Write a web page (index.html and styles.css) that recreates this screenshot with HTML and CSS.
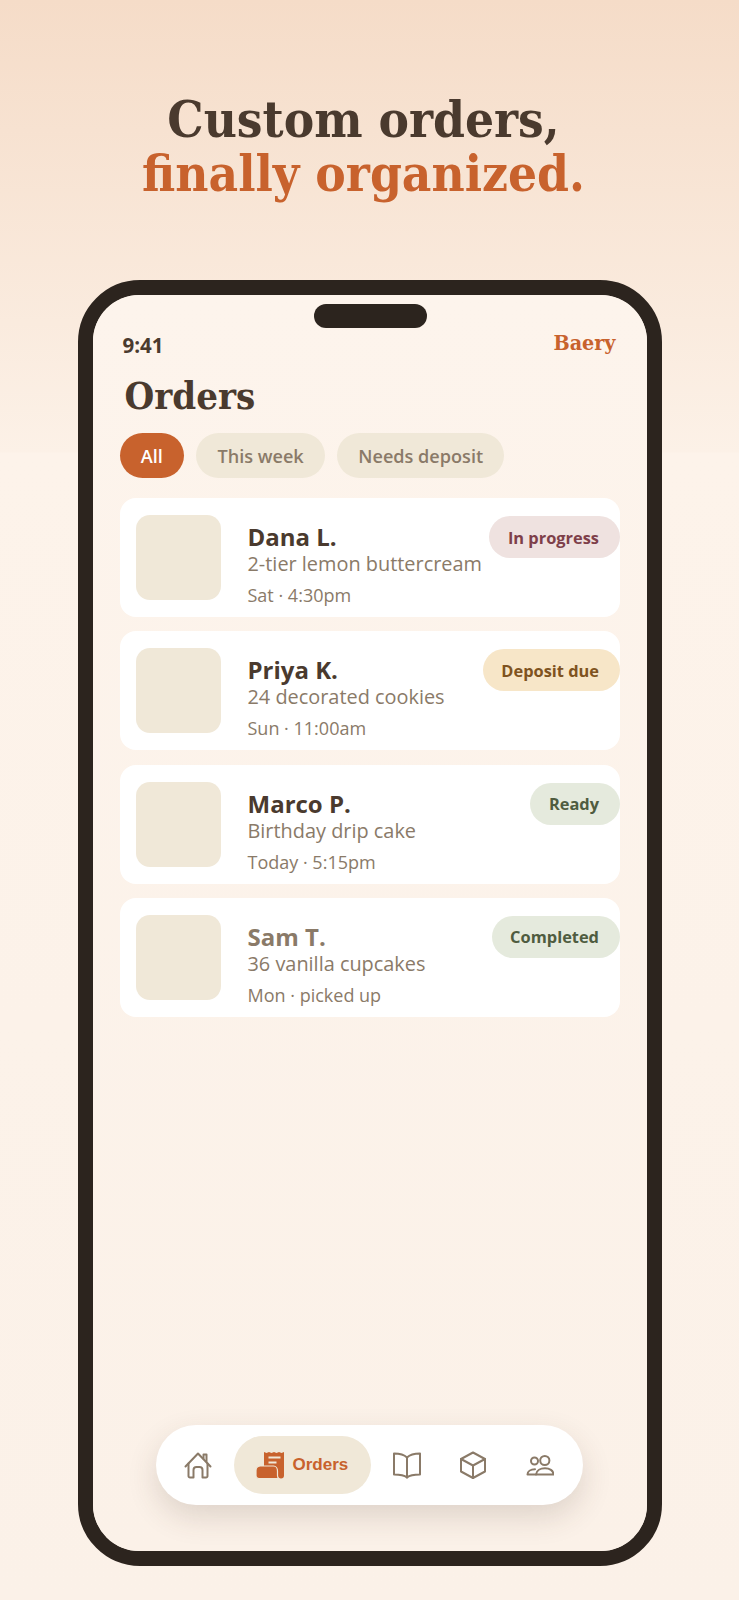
FILE: index.html
```html
<!DOCTYPE html>
<html lang="en">
<head>
<meta charset="utf-8">
<title>Baery orders</title>
<link rel="stylesheet" href="styles.css">
</head>
<body>
<div class="page">
  <header class="hero">
    <h1 class="headline">Custom orders,<br><span class="accent">finally organized.</span></h1>
  </header>
  <div class="phone">
    <div class="screen">
      <div class="island"></div>
      <div class="status"><span class="time">9:41</span><span class="brand">Baery</span></div>
      <h2 class="title">Orders</h2>
      <div class="chips">
        <span class="chip chip-on">All</span>
        <span class="chip">This week</span>
        <span class="chip">Needs deposit</span>
      </div>
      <div class="list">
        <article class="card">
          <div class="thumb"></div>
          <div class="info">
            <div class="name">Dana L.</div>
            <div class="desc">2-tier lemon buttercream</div>
            <div class="meta">Sat · 4:30pm</div>
          </div>
          <span class="pill pill-progress">In progress</span>
        </article>
        <article class="card">
          <div class="thumb"></div>
          <div class="info">
            <div class="name">Priya K.</div>
            <div class="desc">24 decorated cookies</div>
            <div class="meta">Sun · 11:00am</div>
          </div>
          <span class="pill pill-deposit">Deposit due</span>
        </article>
        <article class="card">
          <div class="thumb"></div>
          <div class="info">
            <div class="name">Marco P.</div>
            <div class="desc">Birthday drip cake</div>
            <div class="meta">Today · 5:15pm</div>
          </div>
          <span class="pill pill-ready">Ready</span>
        </article>
        <article class="card">
          <div class="thumb"></div>
          <div class="info">
            <div class="name name-muted">Sam T.</div>
            <div class="desc">36 vanilla cupcakes</div>
            <div class="meta">Mon · picked up</div>
          </div>
          <span class="pill pill-ready">Completed</span>
        </article>
      </div>
      <nav class="nav">
        <svg class="icon" viewBox="0 0 28 28" fill="none" stroke="#8a7a68" stroke-width="2" stroke-linecap="round" stroke-linejoin="round"><path d="M1.500 15.500 14 2.500l12.500 13"/><path d="M4.500 12.500V25a1.500 1.500 0 0 0 1.500 1.500h3.500V19a3 3 0 0 1 3-3h3a3 3 0 0 1 3 3v7.500H22a1.500 1.500 0 0 0 1.500-1.500V12.500"/><path d="M19.500 7.500V3.500h3v7"/></svg>
        <div class="nav-on">
          <svg class="icon" viewBox="0 0 28 28"><path fill="#c8622d" d="M8 1l2.500 1L13 1l2.500 1L18 1l2.500 1L23 1l2.500 1L28 1v23.500a3 3 0 0 1-3 3h-6V17H8z"/><path fill="#c8622d" stroke="#f0e8d8" stroke-width="1.200" d="M4 15H17.500C20 15 21.500 17.500 21.500 20V24.500C21.500 26 22 27 23 27.600H3A3 3 0 0 1 0 24.500V19.500A4.500 4.500 0 0 1 4 15z"/><path stroke="#f0e8d8" stroke-width="1.800" d="M12.500 6.500H24.500M12.500 11.500H20.500"/></svg>
          <span class="nav-label">Orders</span>
        </div>
        <div class="nav-group">
          <svg class="icon" viewBox="0 0 28 28" fill="none" stroke="#8a7a68" stroke-width="2" stroke-linecap="round" stroke-linejoin="round"><path d="M14 6.500C11 3.500 6 2.500 1 2.500v21c5 0 10 .5 13 3 3-2.500 8-3 13-3v-21c-5 0-10 1-13 4z"/><path d="M14 6.500v20"/></svg>
          <svg class="icon" viewBox="0 0 28 28" fill="none" stroke="#8a7a68" stroke-width="2" stroke-linecap="round" stroke-linejoin="round"><path d="M14 1.500 26 8v12.500L14 27 2 20.500V8z"/><path d="M2 8l12 6.500L26 8M14 14.500V27"/></svg>
          <svg class="icon" viewBox="0 0 28 28" fill="none" stroke="#8a7a68" stroke-width="2" stroke-linecap="round" stroke-linejoin="round"><circle cx="8.500" cy="10" r="3.500"/><circle cx="18.800" cy="9.500" r="4.600"/><path d="M10 23.500H1.500c0-3 3-5.200 7.500-5.200"/><path d="M10 23.500c.5-4 4.500-6.200 9-6.200s8.500 2.200 8.500 6.200z"/></svg>
        </div>
      </nav>
    </div>
  </div>
</div>
</body>
</html>
```
FILE: styles.css
```css
* { box-sizing: border-box; }
html, body { margin: 0; padding: 0; }
body { width: 739px; height: 1600px; overflow: hidden; background: #fbf2e9; font-family: "Open Sans", "Noto Sans", sans-serif; }
.page { position: relative; height: 1600px; background: linear-gradient(180deg, #f5dcc8 0, #fcf1e7 452px, #fdf3ea 453px, #fbf1e8 1600px); padding-top: 92px; }
.hero { height: 188px; padding-right: 12px; }
.headline { margin: 0; text-align: center; font-family: "DejaVu Serif Condensed", "DejaVu Serif", serif; font-weight: 700; font-size: 50.800px; line-height: 54px; color: #4a3a2e; }
.accent { color: #c8622d; }
.phone { margin-left: 77.500px; width: 584px; height: 1286px; border: 15.500px solid #2c241e; border-radius: 62px; background: #fbf2e9; }
.screen { position: relative; height: 100%; border-radius: 46px; padding: 0 27px; overflow: hidden; background: linear-gradient(180deg, #fdf4ec, #fbf1e8); }
.island { position: absolute; top: 9px; left: 221px; width: 113px; height: 24px; border-radius: 12px; background: #2c241e; }
.status { display: flex; justify-content: space-between; align-items: center; padding: 34px 4px 0 3px; height: 66px; }
.time { font-size: 20.500px; font-weight: 700; color: #4a3a2e; }
.brand { font-family: "DejaVu Serif Condensed", "DejaVu Serif", serif; font-size: 21.300px; font-weight: 700; color: #c8622d; margin-top: -6px; }
.title { margin: 12px 0 0 5px; font-family: "DejaVu Serif Condensed", "DejaVu Serif", serif; font-weight: 700; font-size: 38px; line-height: 46px; color: #4a3a2e; }
.chips { display: flex; gap: 12px; margin-top: 14px; }
.chip { height: 45px; padding: 0 21.300px; border-radius: 22.500px; display: flex; align-items: center; background: #f0e8d8; font-size: 18.100px; font-weight: 600; color: #8a7a68; }
.chip-on { background: #c8622d; color: #fff; }
.list { display: flex; flex-direction: column; gap: 14.300px; margin-top: 20px; }
.card { display: flex; align-items: flex-start; height: 119px; padding: 17px 0 0 16px; background: #fff; border-radius: 16px; }
.thumb { flex: none; width: 85px; height: 85px; border-radius: 14px; background: #f0e8d8; }
.info { flex: 1; padding: 7px 0 0 27px; }
.name { font-size: 24px; line-height: 30px; font-weight: 700; color: #4a3a2e; }
.name-muted { color: #8a7a68; }
.desc { font-size: 19.900px; line-height: 24px; color: #8a7a68; }
.meta { margin-top: 7px; font-size: 18px; line-height: 24px; color: #8a7a68; }
.pill { flex: none; margin-top: 1px; height: 42px; padding: 0 20.500px 0 18.500px; border-radius: 21px; display: flex; align-items: center; font-size: 16.400px; font-weight: 700; }
.pill-progress { background: #efe2e0; color: #7e3f4a; }
.pill-deposit { background: #f7e6c8; color: #7f5320; }
.pill-ready { background: #e5eadd; color: #4f5c40; }
.nav { position: absolute; left: 63px; top: 1130px; width: 427px; height: 80px; padding-left: 28px; display: flex; align-items: center; gap: 22px; border-radius: 40px; background: #fff; box-shadow: 0 12px 30px rgba(74, 58, 46, .16); }
.icon { flex: none; width: 28px; height: 28px; display: block; }
.nav-on { display: flex; align-items: center; gap: 9px; width: 137px; height: 58px; padding-left: 22px; border-radius: 29px; background: #f0e8d8; }
.nav-label { font-family: "Liberation Sans", sans-serif; font-size: 17px; font-weight: 700; color: #c8622d; }
.nav-group { display: flex; gap: 38.500px; }
```
